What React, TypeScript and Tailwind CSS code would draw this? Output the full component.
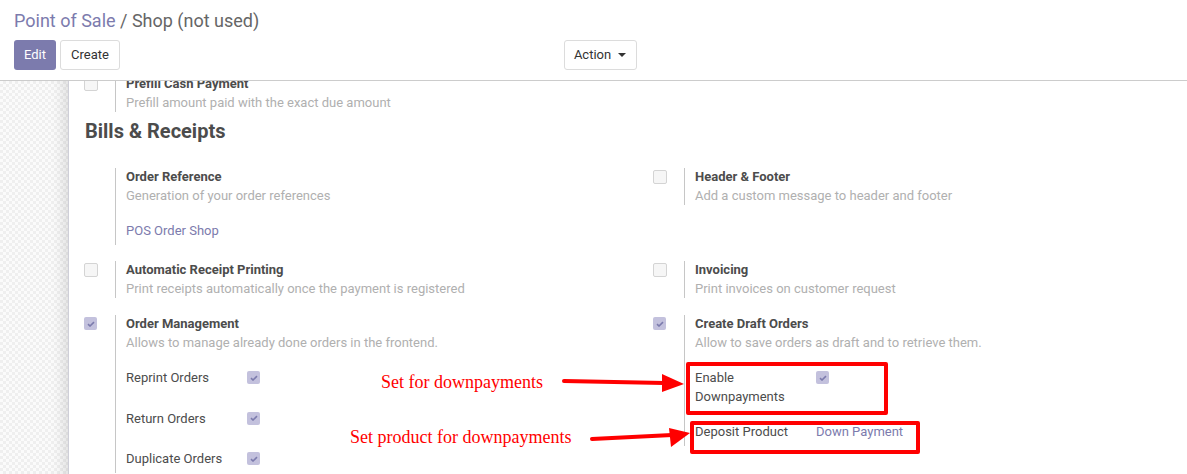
import type { ReactNode } from "react";

const font = { fontFamily: "Roboto, 'Liberation Sans', sans-serif" };

function Box({ checked = false }: { checked?: boolean }) {
  if (checked) {
    return (
      <span className="flex h-[13px] w-[13px] items-center justify-center rounded-[2px] bg-[#c3c1dd]">
        <svg width="8" height="6" viewBox="0 0 8 6">
          <path d="M1 3.2 L3 5 L7 1.2" fill="none" stroke="#7c7bad" strokeWidth="1.6" />
        </svg>
      </span>
    );
  }
  return (
    <span className="block h-[14px] w-[14px] rounded-[2px] border border-[#d4d4d4] bg-[#f6f6f6]" />
  );
}

function Setting({
  checkbox,
  checked,
  title,
  desc,
  children,
  className = "",
}: {
  checkbox?: boolean;
  checked?: boolean;
  title: string;
  desc: string;
  children?: ReactNode;
  className?: string;
}) {
  return (
    <div className={`flex items-start pl-[15px] ${className}`}>
      <div className="w-[31px] pt-[2px]">{checkbox && <Box checked={checked} />}</div>
      <div className="flex-1 border-l border-[#c6c6c6] pl-[10px] text-[13px]">
        <div className="font-bold leading-[18px] text-[#4c4c4c]">{title}</div>
        <div className="leading-[19px] text-[#b0b0b0]">{desc}</div>
        {children}
      </div>
    </div>
  );
}

function SubRow({ label, children }: { label: string; children: ReactNode }) {
  return (
    <div className="flex min-h-[24px] items-start">
      <div className="w-[121px] leading-[19px] text-[#4c4c4c]">{label}</div>
      <div className="pt-[3px]">{children}</div>
    </div>
  );
}

export default function App() {
  return (
    <div className="relative h-[474px] w-[1187px] overflow-hidden bg-white" style={font}>
      <header className="h-[81px] border-b border-[#cccccc] px-[14px]">
        <div className="pt-[7px] text-[18px] leading-[27px]">
          <span className="text-[#7c7bad]">Point of Sale</span>
          <span className="text-[#666666]"> / Shop (not used)</span>
        </div>
        <div className="mt-[6px] flex items-center">
          <button className="h-[30px] rounded-[3px] bg-[#7c7bad] px-[10px] text-[13px] text-white">
            Edit
          </button>
          <button className="ml-[4px] h-[30px] rounded-[3px] border border-[#dcdcdc] bg-white px-[10px] text-[13px] text-[#333]">
            Create
          </button>
          <button className="ml-[444px] flex h-[30px] items-center rounded-[3px] border border-[#dcdcdc] bg-white pl-[9px] pr-[10px] text-[13px] text-[#333]">
            Action
            <span className="ml-[7px] h-0 w-0 border-x-[4px] border-t-[4px] border-x-transparent border-t-[#333]" />
          </button>
        </div>
      </header>

      <div className="flex h-[393px]">
        <div className="w-[69px] shrink-0 border-r border-[#cfcfd8] bg-[#fbfbfb] bg-[image:repeating-conic-gradient(#efefef_0%_25%,#fbfbfb_0%_50%)] bg-[length:6px_6px] shadow-[inset_-14px_0_14px_-10px_rgba(0,0,0,0.12)]" />
        <div className="flex-1 overflow-hidden">
          <div className="grid grid-cols-[569px_569px]">
            <Setting
              checkbox
              className="-mt-[6px]"
              title="Prefill Cash Payment"
              desc="Prefill amount paid with the exact due amount"
            />
          </div>
          <h2 className="ml-[16px] mt-[7px] text-[20px] font-bold leading-[24px] text-[#4c4c4c]">
            Bills &amp; Receipts
          </h2>
          <div className="mt-[25px] grid grid-cols-[569px_569px] items-start gap-y-[16px]">
            <Setting title="Order Reference" desc="Generation of your order references">
              <div className="mt-[16px] h-[24px] leading-[19px] text-[#7c7bad]">POS Order Shop</div>
            </Setting>
            <Setting
              checkbox
              title="Header & Footer"
              desc="Add a custom message to header and footer"
            />
            <Setting
              checkbox
              title="Automatic Receipt Printing"
              desc="Print receipts automatically once the payment is registered"
            />
            <Setting checkbox title="Invoicing" desc="Print invoices on customer request" />
            <Setting
              checkbox
              checked
              className="mt-[1px] pb-[40px]"
              title="Order Management"
              desc="Allows to manage already done orders in the frontend."
            >
              <div className="mt-[16px] flex flex-col gap-[16.5px]">
                <SubRow label="Reprint Orders">
                  <Box checked />
                </SubRow>
                <SubRow label="Return Orders">
                  <Box checked />
                </SubRow>
                <SubRow label="Duplicate Orders">
                  <Box checked />
                </SubRow>
              </div>
            </Setting>
            <Setting
              checkbox
              checked
              className="mt-[1px]"
              title="Create Draft Orders"
              desc="Allow to save orders as draft and to retrieve them."
            >
              <div className="mt-[16px] flex flex-col gap-[16px]">
                <SubRow label="Enable Downpayments">
                  <Box checked />
                </SubRow>
                <SubRow label="Deposit Product">
                  <span className="-mt-[3px] block leading-[19px] text-[#7c7bad]">Down Payment</span>
                </SubRow>
              </div>
            </Setting>
          </div>
        </div>
      </div>

      {/* annotations drawn over the screenshot */}
      <div className="pointer-events-none absolute left-[686px] top-[362px] h-[53px] w-[202px] rounded-[2px] border-[4px] border-[#ff0000]" />
      <div className="pointer-events-none absolute left-[690px] top-[421px] h-[33px] w-[230px] rounded-[2px] border-[4px] border-[#ff0000]" />
      <div
        className="pointer-events-none absolute left-[381px] top-[370px] text-[18px] leading-[24px] text-[#ff0000]"
        style={{ fontFamily: "'Liberation Serif', serif" }}
      >
        Set for downpayments
      </div>
      <div
        className="pointer-events-none absolute left-[350px] top-[425px] text-[18px] leading-[24px] text-[#ff0000]"
        style={{ fontFamily: "'Liberation Serif', serif" }}
      >
        Set product for downpayments
      </div>
      <svg className="pointer-events-none absolute left-0 top-0" width="1187" height="474">
        <path d="M564 381 L664 383" stroke="#ff0000" strokeWidth="4" strokeLinecap="round" />
        <path d="M662 374 L684 384 L662 392 Z" fill="#ff0000" />
        <path d="M592 439 L672 435" stroke="#ff0000" strokeWidth="4" strokeLinecap="round" />
        <path d="M669 428 L690 433 L671 447 Z" fill="#ff0000" />
      </svg>
    </div>
  );
}
